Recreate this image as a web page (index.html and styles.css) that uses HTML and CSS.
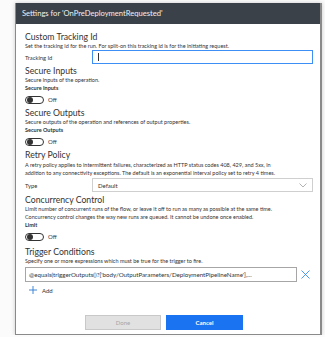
FILE: index.html
```html
<!DOCTYPE html>
<html>
<head>
    <link rel="stylesheet" href="styles.css">
</head>
<body>
    <div class="dialog">
        <div class="header">Settings for 'OnPreDeploymentRequested'</div>
        <div class="content">
            <div class="section">
                <div class="title">Custom Tracking Id</div>
                <div class="desc">Set the tracking id for the run. For split-on this tracking id is for the initiating request.</div>
                <div class="row">
                    <span class="label">Tracking Id</span>
                    <div class="input focused"><span class="caret"></span></div>
                </div>
            </div>
            <div class="section">
                <div class="title">Secure Inputs</div>
                <div class="desc">Secure inputs of the operation.</div>
                <div class="sub">Secure Inputs</div>
                <div class="toggle-row"><span class="toggle"><span class="knob"></span></span>Off</div>
            </div>
            <div class="section">
                <div class="title">Secure Outputs</div>
                <div class="desc">Secure outputs of the operation and references of output properties.</div>
                <div class="sub">Secure Outputs</div>
                <div class="toggle-row"><span class="toggle"><span class="knob"></span></span>Off</div>
            </div>
            <div class="section">
                <div class="title">Retry Policy</div>
                <div class="desc">A retry policy applies to intermittent failures, characterized as HTTP status codes 408, 429, and 5xx, in<br>addition to any connectivity exceptions. The default is an exponential interval policy set to retry 4 times.</div>
                <div class="row">
                    <span class="label">Type</span>
                    <div class="input select">Default
                        <svg width="8" height="5" viewBox="0 0 8 5"><path d="M0.5 0.5 L4 4 L7.5 0.5" fill="none" stroke="#a0a0a0" stroke-width="0.8"/></svg>
                    </div>
                </div>
            </div>
            <div class="section">
                <div class="title">Concurrency Control</div>
                <div class="desc">Limit number of concurrent runs of the flow, or leave it off to run as many as possible at the same time.<br>Concurrency control changes the way new runs are queued. It cannot be undone once enabled.</div>
                <div class="sub">Limit</div>
                <div class="toggle-row"><span class="toggle"><span class="knob"></span></span>Off</div>
            </div>
            <div class="section">
                <div class="title">Trigger Conditions</div>
                <div class="desc">Specify one or more expressions which must be true for the trigger to fire.</div>
                <div class="cond-row">
                    <div class="input expr">@equals(triggerOutputs()?['body/OutputParameters/DeploymentPipelineName'],...</div>
                    <svg class="remove" width="9" height="9" viewBox="0 0 9 9"><path d="M0.5 0.5 L8.5 8.5 M8.5 0.5 L0.5 8.5" stroke="#3f8be8" stroke-width="0.9"/></svg>
                </div>
                <div class="add">
                    <svg class="plus" width="8" height="8" viewBox="0 0 8 8"><path d="M4 0 V8 M0 4 H8" stroke="#2b7cd3" stroke-width="0.9"/></svg>
                    Add
                </div>
            </div>
        </div>
        <div class="footer">
            <button class="btn done">Done</button>
            <button class="btn cancel">Cancel</button>
        </div>
    </div>
</body>
</html>
```
FILE: styles.css
```css
body {
    margin: 0;
    background-color: #fbfbfb;
    font-family: Lato, "Noto Sans", sans-serif;
    color: #333;
}

.dialog {
    width: 304px;
    height: 331px;
    margin: 3px 0 0 15px;
    background-color: #fff;
    border-left: 1px solid #8a8a8a;
    border-right: 2px solid #8a8a8a;
    border-bottom: 1px solid #8a8a8a;
    box-shadow: 0 0 4px rgba(0, 0, 0, 0.2);
    display: flex;
    flex-direction: column;
}

.header {
    background-color: #3b4149;
    color: #f0f0f0;
    font-size: 7.6px;
    height: 21px;
    line-height: 21px;
    padding-left: 6px;
}

.content {
    padding: 7px 7px 0 9px;
}

.title {
    font-size: 8.7px;
    line-height: 11px;
}

.desc {
    font-size: 5.5px;
    line-height: 8px;
    white-space: nowrap;
}

.sub {
    font-size: 5.5px;
    font-weight: 700;
    line-height: 8px;
}

.row {
    display: flex;
    align-items: center;
    height: 14px;
    margin: 0 0 1px;
}

.label {
    font-size: 5.8px;
    width: 67px;
}

.input {
    flex: 1;
    height: 14px;
    border: 1px solid #a6a6a6;
    box-sizing: border-box;
    font-size: 6px;
    display: flex;
    align-items: center;
    padding-left: 5px;
}

.focused {
    border: 1.5px solid #3d8ef5;
}

.caret {
    width: 1px;
    height: 8px;
    background-color: #333;
}

.select {
    justify-content: space-between;
    padding-right: 5px;
    border-color: #cfcfcf;
}

.toggle-row {
    display: flex;
    align-items: center;
    font-size: 6px;
    height: 15px;
}

.toggle {
    width: 19px;
    height: 8px;
    box-sizing: border-box;
    border: 1px solid #333;
    border-radius: 5px;
    margin-right: 4px;
    display: flex;
    align-items: center;
    padding-left: 1px;
}

.knob {
    width: 6px;
    height: 6px;
    border-radius: 50%;
    background-color: #333;
}

.section:nth-child(4) .desc {
    margin-top: 1px;
}

.section:nth-child(4) .row {
    margin-top: 1px;
}

.section:nth-child(5) .title {
    margin-top: 2px;
}

.section:nth-child(6) .title {
    margin-top: 2px;
}

.cond-row {
    display: flex;
    align-items: center;
    margin-top: 2px;
}

.expr {
    flex: none;
    width: 272px;
    height: 15px;
    white-space: nowrap;
    overflow: hidden;
    padding-left: 3px;
    font-size: 6.2px;
}

.remove {
    margin-left: 4px;
}

.add {
    font-size: 6px;
    margin: 4px 0 0 4px;
    display: flex;
    align-items: center;
}

.plus {
    margin-right: 5px;
}

.footer {
    margin-top: auto;
    display: flex;
    gap: 5px;
    padding: 0 0 4px 69px;
}

.btn {
    width: 76px;
    height: 15px;
    font-family: inherit;
    font-size: 6px;
    border: none;
    padding: 0;
}

.done {
    background-color: #e1e1e1;
    color: #a6a6a6;
    border: 1px solid #c8c8c8;
}

.cancel {
    width: 77px;
    background-color: #1a73f0;
    color: #fff;
    font-weight: 700;
}
```
